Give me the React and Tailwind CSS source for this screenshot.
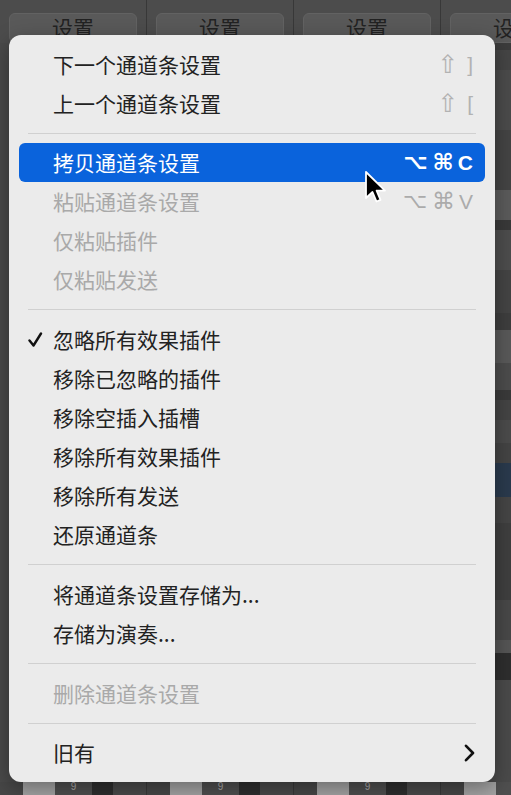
import React from 'react'

const cjk = "font-['Noto_Sans_CJK_SC','Noto_Sans',sans-serif]"
const latin = "font-['Liberation_Sans','DejaVu_Sans',sans-serif]"
const symbol = "font-['DejaVu_Sans',sans-serif]"

const groups = [
  {
    sep: 0,
    items: [
      { label: '下一个通道条设置', shift: ']' },
      { label: '上一个通道条设置', shift: '[' },
    ],
  },
  {
    sep: 20,
    items: [
      { label: '拷贝通道条设置', keys: 'C', active: true },
      { label: '粘贴通道条设置', keys: 'V', disabled: true },
      { label: '仅粘贴插件', disabled: true },
      { label: '仅粘贴发送', disabled: true },
    ],
  },
  {
    sep: 21,
    items: [
      { label: '忽略所有效果插件', checked: true },
      { label: '移除已忽略的插件' },
      { label: '移除空插入插槽' },
      { label: '移除所有效果插件' },
      { label: '移除所有发送' },
      { label: '还原通道条' },
    ],
  },
  {
    sep: 21,
    items: [{ label: '将通道条设置存储为...' }, { label: '存储为演奏...' }],
  },
  { sep: 21, items: [{ label: '删除通道条设置', disabled: true }] },
  { sep: 20, items: [{ label: '旧有', submenu: true }] },
]

const MixerColumn = ({ last }) => (
  <div className="w-[147px] shrink-0 h-full flex flex-col border-r border-[#383838] bg-[#4a4a4a]">
    <div className="pt-[13px] px-[9px] bg-[#4c4c4c]">
      <div className={`h-[30px] rounded-[6px] bg-[#595959] border border-[#626262] flex items-center justify-center text-[21px] text-[#222] ${cjk}`}>
        设置
      </div>
    </div>
    <div className="flex-1 flex flex-col ml-[14px]">
      <div className="h-[7px] bg-[#3c3c3c]" />
      <div className="h-[20px] bg-[#454545]" />
      <div className="h-[60px] bg-[#4b4b4b]" />
      <div className="h-[60px] bg-[#444]" />
      <div className="h-[30px] bg-[#5b5b5b]" />
      <div className="h-[10px] bg-[#393939]" />
      <div className="h-[40px] bg-[#4d4d4d]" />
      <div className="h-[43px] bg-[#444]" />
      <div className="h-[17px] bg-[#3e3e3e]" />
      <div className={`h-[33px] bg-[#595959] flex items-center justify-end text-[20px] text-[#c8c8c8] overflow-hidden ${latin}`}>
        {last ? 'Err' : ''}
      </div>
      <div className="h-[27px] bg-[#4c4c4c]" />
      <div className="h-[10px] bg-[#3a3a3a]" />
      <div className="h-[20px] bg-[#444]" />
      <div className={`h-[23px] bg-[#4b4b4b] flex items-center justify-end text-[20px] text-[#4fd05a] overflow-hidden ${latin}`}>
        {last ? 'Re' : ''}
      </div>
      <div className="h-[20px] bg-[#444]" />
      <div className="h-[34px] bg-[#2a3a4d] flex items-center justify-end gap-[2px] pr-[3px]">
        <div className="w-[2px] h-[10px] bg-[#4aa3f0]" />
        <div className="w-[2px] h-[18px] bg-[#4aa3f0]" />
        <div className="w-[2px] h-[8px] bg-[#4aa3f0]" />
        <div className="w-[2px] h-[22px] bg-[#4aa3f0]" />
      </div>
      <div className="h-[26px] bg-[#454545]" />
      <div className="h-[77px] bg-[#3f3f3f] relative overflow-hidden">
        <div className="absolute -right-[25px] top-[8px] w-[60px] h-[60px] rounded-full bg-[#2c2c2c] border border-[#242424]" />
        <div className="absolute right-[2px] top-[26px] w-[6px] h-[6px] rounded-full bg-[#41d046]" />
      </div>
      <div className="h-[40px] bg-[#484848]" />
      <div className="h-[13px] bg-[#555]" />
      <div className="h-[27px] bg-[#2e2e2e]" />
      <div className="flex-1 bg-[#4a4a4a]" />
    </div>
    <div className="h-[13px] flex">
      <div className="w-[23px] bg-[#474747]" />
      <div className="w-[32px] bg-[#a3a3a3]" />
      <div className={`w-[37px] bg-[#4f4f4f] text-[10px] leading-[10px] text-[#aaa] text-center ${latin}`}>9</div>
      <div className="w-[21px] bg-[#2e2e2e]" />
      <div className="flex-1 bg-[#4a4a4a]" />
    </div>
  </div>
)

const Cursor = () => (
  <svg className="absolute left-[364px] top-[170px]" width="26" height="36" viewBox="0 0 26 36">
    <path
      d="M2 2 L2 28 L8.5 22 L12.5 31.5 L16.5 29.8 L12.6 20.6 L21 20.6 Z"
      fill="#000"
      stroke="#fff"
      strokeWidth="1.8"
      strokeLinejoin="round"
    />
  </svg>
)

const Keys = ({ item }) => {
  if (item.shift) {
    return (
      <span className="flex items-center text-[#b2b2b2]">
        <span className={`text-[25px] leading-none ${symbol}`}>⇧</span>
        <span className={`ml-[9px] text-[21px] leading-none font-light ${latin}`}>{item.shift}</span>
      </span>
    )
  }
  if (!item.keys) return null
  const color = item.active ? 'text-white font-bold' : 'text-[#ababab]'
  return (
    <span className={`flex items-center ${color}`}>
      <span className={`text-[21px] leading-none ${symbol}`}>⌥</span>
      <span className={`ml-[5px] text-[23px] leading-none ${symbol}`}>⌘</span>
      <span className={`ml-[4px] text-[21px] leading-none ${latin}`}>{item.keys}</span>
    </span>
  )
}

const MenuRow = ({ item }) => {
  const text = item.active ? 'text-white' : item.disabled ? 'text-[#a9a9a9]' : 'text-[#222]'
  return (
    <div
      className={`relative h-[39px] flex items-center pl-[34px] pr-[12px] rounded-[6px] ${
        item.active ? 'bg-[#0a63dc]' : ''
      }`}
    >
      {item.checked && (
        <svg className="absolute left-[9px] top-[12px]" width="15" height="16" viewBox="0 0 15 16">
          <path d="M1.5 8.5 L5.5 13.5 L13 1.5" fill="none" stroke="#111" strokeWidth="2.4" strokeLinecap="round" strokeLinejoin="round" />
        </svg>
      )}
      <span className={`text-[21px] leading-none ${cjk} ${text}`}>{item.label}</span>
      <div className="flex-1" />
      <Keys item={item} />
      {item.submenu && (
        <svg className="-mr-[2px]" width="12" height="18" viewBox="0 0 12 18">
          <path d="M3 1.8 L10 9 L3 16.2" fill="none" stroke="#111" strokeWidth="2.6" strokeLinecap="round" strokeLinejoin="round" />
        </svg>
      )}
    </div>
  )
}

const Separator = ({ h }) => (
  <div className="flex items-center px-[9px]" style={{ height: h }}>
    <div className="h-px w-full bg-[#d0d0d0]" />
  </div>
)

export default function App() {
  return (
    <div className="relative w-[511px] h-[795px] overflow-hidden bg-[#4a4a4a]">
      <div className="flex h-full">
        <MixerColumn />
        <MixerColumn />
        <MixerColumn />
        <MixerColumn last />
      </div>

      <div className="absolute left-[9px] top-[35px] w-[486px] h-[747px] rounded-[12px] bg-[#ebebeb] pt-[10px] px-[10px] shadow-[0_6px_20px_rgba(0,0,0,0.35)]">
        {groups.map((group, gi) => (
          <div key={gi}>
            {group.sep > 0 && <Separator h={group.sep} />}
            {group.items.map((item) => (
              <MenuRow key={item.label} item={item} />
            ))}
          </div>
        ))}
      </div>

      <Cursor />
    </div>
  )
}
